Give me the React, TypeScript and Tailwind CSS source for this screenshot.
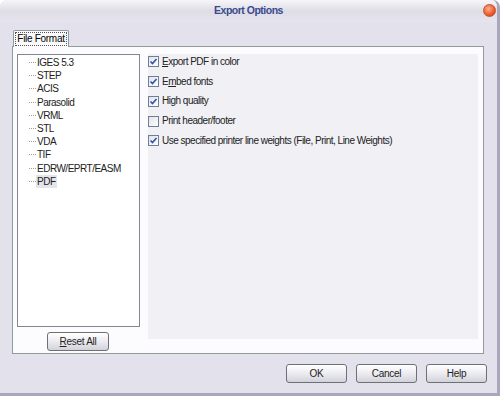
import React from "react";

const formats = ["IGES 5.3", "STEP", "ACIS", "Parasolid", "VRML", "STL", "VDA", "TIF", "EDRW/EPRT/EASM", "PDF"];

const options = [
  { pre: "", key: "E", post: "xport PDF in color", checked: true },
  { pre: "E", key: "m", post: "bed fonts", checked: true },
  { pre: "", key: "", post: "High quality", checked: true },
  { pre: "", key: "", post: "Print header/footer", checked: false },
  { pre: "", key: "", post: "Use specified printer line weights (File, Print, Line Weights)", checked: true },
];

const CheckBox = ({ checked }: { checked: boolean }) => (
  <span className="flex h-[11px] w-[11px] items-center justify-center border border-[#6d7f98] bg-gradient-to-br from-[#e2e2e8] to-white">
    {checked && (
      <svg width="9" height="9" viewBox="0 0 9 9">
        <path d="M1.5 4.5 L3.5 6.5 L7.5 2" fill="none" stroke="#2d52b0" strokeWidth="1.6" />
      </svg>
    )}
  </span>
);

const Btn = ({ children, className = "" }: { children: React.ReactNode; className?: string }) => (
  <button
    className={`flex h-[19px] items-center justify-center rounded-[3px] border border-[#6f7075] bg-gradient-to-b from-white via-[#ecebf0] to-[#d2d2da] text-[10px] tracking-[-0.3px] text-[#222] ${className}`}
  >
    {children}
  </button>
);

export default function App() {
  return (
    <div
      className="flex h-[396px] w-[500px] bg-white"
      style={{ fontFamily: '"Liberation Sans", Arial, sans-serif' }}
    >
      <div className="flex h-[396px] w-[500px] flex-col rounded-t-[7px] border-r-[3px] border-b-[3px] border-[#a9a7bb] bg-[#e3e2ec]">
        {/* title bar */}
        <div className="relative flex h-[22px] items-center justify-center rounded-t-[7px] bg-gradient-to-b from-[#f6f6fa] via-[#dedde6] to-[#e6e5ee]">
          <span className="text-[10.5px] font-bold tracking-[-0.5px] text-[#3a4a8c]">Export Options</span>
          <span className="absolute right-[1px] top-[4px] h-[13px] w-[13px] rounded-full border border-[#c4502e] bg-[radial-gradient(circle_at_40%_35%,#ffb08a,#ec5a2c_60%,#c73d1c)]" />
        </div>

        <div className="flex flex-1 flex-col pl-[12px] pr-[10px] pt-[8px]">
          {/* tab */}
          <div className="flex">
            <div className="relative z-10 -mb-px ml-px flex h-[17px] w-[56px] items-center justify-center rounded-t-[2px] border border-b-0 border-[#919b9c] bg-[#fbfbfd]">
              <span className="border border-dotted border-[#555] px-[1px] text-[10px] leading-[12px] tracking-[-0.3px] text-black">
                File Format
              </span>
            </div>
          </div>

          {/* panel */}
          <div className="flex h-[308px] w-[472px] border border-[#919b9c] bg-[#fcfcfe] pt-[7px]">
            <div className="flex w-[132px] flex-col pl-[4px]">
              <div className="h-[273px] w-[123px] border border-[#828790] bg-white pt-[1px]">
                {formats.map((f) => (
                  <div key={f} className="flex h-[13.2px] items-center">
                    <span className="ml-[11px] w-[7px] border-t border-dotted border-[#a0a0a0]" />
                    <span
                      className={`px-[1px] text-[10px] leading-[13px] tracking-[-0.5px] text-[#222] ${f === "PDF" ? "bg-[#e4e4ea]" : ""}`}
                    >
                      {f}
                    </span>
                  </div>
                ))}
              </div>
              <Btn className="ml-[30px] mt-[5px] w-[62px]">
                <span>
                  <span className="underline">R</span>eset All
                </span>
              </Btn>
            </div>

            <div className="ml-[3px] flex h-[285px] w-[330px] flex-col gap-[8.3px] bg-[#f0f0f5] pt-[2px]">
              {options.map((o, i) => (
                <div key={i} className="flex h-[11.5px] items-center gap-[3px]">
                  <CheckBox checked={o.checked} />
                  <span className="text-[10px] leading-[12px] tracking-[-0.5px] text-[#222]">
                    {o.pre}
                    {o.key && <span className="underline">{o.key}</span>}
                    {o.post}
                  </span>
                </div>
              ))}
            </div>
          </div>

          {/* bottom buttons */}
          <div className="mt-[10px] flex justify-end gap-[9px]">
            <Btn className="w-[61px]">OK</Btn>
            <Btn className="w-[61px]">Cancel</Btn>
            <Btn className="w-[61px]">Help</Btn>
          </div>
        </div>
      </div>
    </div>
  );
}
